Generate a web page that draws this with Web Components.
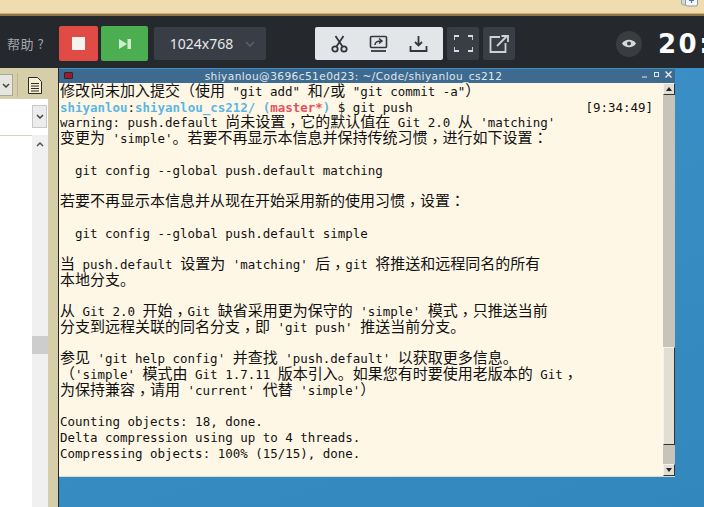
<!DOCTYPE html>
<html lang="zh-CN">
<head>
<meta charset="utf-8">
<style>
    html, body { margin: 0; height: 100%; overflow: hidden; background: #25292e; }
</style>
</head>
<body>
<app-shell>
    <top-strip></top-strip>
    <tool-bar></tool-bar>
    <div style="display: flex; height: 439px;">
        <side-panel></side-panel>
        <desk-area>
            <term-window title="shiyanlou@3696c51e0d23: ~/Code/shiyanlou_cs212"></term-window>
        </desk-area>
    </div>
</app-shell>
<script>
class AppShell extends HTMLElement {
    constructor() {
        super();
        this.attachShadow({ mode: 'open' });
        this.shadowRoot.innerHTML = `
            <style>
                :host { display: block; width: 704px; height: 507px; overflow: hidden; }
            </style>
            <slot></slot>
        `;
    }
}

class TopStrip extends HTMLElement {
    constructor() {
        super();
        this.attachShadow({ mode: 'open' });
        this.shadowRoot.innerHTML = `
            <style>
                :host { display: flex; justify-content: flex-end; align-items: flex-end; box-sizing: border-box; height: 16px; padding-right: 5px; padding-bottom: 7px; background: #efdcb0; border-bottom: 2px solid #8f7444; box-shadow: inset 0 -1px 0 #c9ae78; overflow: hidden; }
                svg { display: block; }
            </style>
            <svg width="18" height="9" viewBox="0 0 18 9">
                <rect x="0.5" y="-3" width="12" height="10" rx="2" fill="#cfd6de" stroke="#9aa4ae"/>
                <rect x="4.5" y="-3" width="12" height="11" rx="2" fill="#f4f6f8" stroke="#8d98a6"/>
                <path d="M10.5 0v5M8 2.5h5" stroke="#4a78b4" stroke-width="1.2" fill="none"/>
            </svg>
        `;
    }
}

class ToolBar extends HTMLElement {
    constructor() {
        super();
        this.attachShadow({ mode: 'open' });
        this.shadowRoot.innerHTML = `
            <style>
                :host { display: flex; align-items: center; box-sizing: border-box; height: 52px; padding: 3px 0 0 7px; background: #25292e; overflow: hidden; font-family: "Noto Sans", "Noto Sans CJK SC", sans-serif; }
                .help { flex: none; width: 52px; color: #a3a7ab; font-size: 13px; letter-spacing: 0.5px; font-family: "Noto Sans CJK SC", sans-serif; white-space: pre; }
                .btn { display: flex; flex: none; align-items: center; justify-content: center; box-sizing: border-box; height: 35px; border-radius: 2px; }
                .stop { width: 39px; background: #e04c45; }
                .next { width: 47px; margin-left: 3px; background: #4bae50; }
                .res { width: 112px; margin-left: 6px; padding-left: 5px; height: 33px; background: #393e46; color: #e6e8ea; font-size: 14px; gap: 12px; }
                .tools { width: 128px; height: 33px; margin-left: 49px; background: #e3e6e9; gap: 21px; }
                .sq { width: 32px; height: 33px; margin-left: 4px; background: #393e46; }
                .eye { display: flex; flex: none; align-items: center; justify-content: center; width: 26px; height: 26px; margin-left: 101px; border-radius: 50%; background: #3a3d40; }
                .clock { flex: none; margin-left: 16px; color: #fff; font: bold 26px "DejaVu Sans", sans-serif; letter-spacing: 2.5px; white-space: nowrap; }
                svg { display: block; }
            </style>
            <span class="help">帮助 ?</span>
            <div class="btn stop"><svg width="13" height="13"><rect width="13" height="13" fill="#f7f1f0"/></svg></div>
            <div class="btn next"><svg width="12" height="10" viewBox="0 0 12 10"><path d="M0 0l8 5-8 5z M8.5 0H12V10H8.5z" fill="#cfeccf"/></svg></div>
            <div class="btn res"><span>1024x768</span><svg width="10" height="6" viewBox="0 0 10 6"><path d="M1 1l4 4 4-4" stroke="#5b616a" stroke-width="1.5" fill="none"/></svg></div>
            <div class="btn tools">
                <svg width="17" height="18" viewBox="0 0 17 18" fill="none" stroke="#33373c" stroke-width="1.8">
                    <circle cx="4" cy="14" r="2.7"/><circle cx="13" cy="14" r="2.7"/>
                    <path d="M5.5 11.6L12.5 1M11.5 11.6L4.5 1"/>
                </svg>
                <svg width="19" height="18" viewBox="0 0 19 18" fill="none" stroke="#33373c" stroke-width="1.6">
                    <rect x="1.5" y="1.5" width="16" height="11" rx="1"/>
                    <path d="M2 16h15" stroke-width="1.8"/>
                    <path d="M6 10c0-3 2-4 6-4M10 3.5L13 6l-3 2.5" stroke-width="1.5"/>
                </svg>
                <svg width="19" height="18" viewBox="0 0 19 18" fill="none" stroke="#33373c" stroke-width="1.8">
                    <path d="M9.5 1v9M6 7l3.5 3.5L13 7"/>
                    <path d="M1.5 11v5h16v-5"/>
                </svg>
            </div>
            <div class="btn sq">
                <svg width="19" height="17" viewBox="0 0 19 17" fill="none" stroke="#d8dadc" stroke-width="1.8">
                    <path d="M0 5V1h5M14 1h5v4M19 12v4h-5M5 16H0v-4"/>
                </svg>
            </div>
            <div class="btn sq">
                <svg width="20" height="18" viewBox="0 0 20 18" fill="none" stroke="#cfd2d5" stroke-width="1.8">
                    <path d="M11 2H1.5v15h15V8"/>
                    <path d="M8 11L18 1M12.5 1H19v6"/>
                </svg>
            </div>
            <div class="eye">
                <svg width="14" height="9" viewBox="0 0 14 9"><path d="M0 4.5C3 -.5 11 -.5 14 4.5 11 9.5 3 9.5 0 4.5z" fill="#d6d8da"/><circle cx="7" cy="4.5" r="2" fill="#3a3d40"/></svg>
            </div>
            <span class="clock">20:</span>
        `;
    }
}

class SidePanel extends HTMLElement {
    constructor() {
        super();
        this.attachShadow({ mode: 'open' });
        this.shadowRoot.innerHTML = `
            <style>
                :host { display: flex; flex-direction: column; flex: none; box-sizing: border-box; width: 59px; background: #d5cea8; border-right: 1px solid #23262a; }
                .head { display: flex; align-items: center; box-sizing: border-box; height: 31px; padding-top: 3px; }
                .pick { display: flex; align-items: center; justify-content: center; box-sizing: border-box; width: 13px; height: 22px; background: #e6e5de; border: 1px solid #a8a89c; border-left: 0; }
                .sep { width: 1px; height: 24px; margin-left: 4px; background: #bdb690; }
                .doc { margin-left: 10px; }
                .body { display: flex; flex: 1; width: 48px; background: #fff; }
                .list { flex: 1; margin-top: 36px; height: 0; border-top: 1px solid #d6d2bc; }
                .bar { width: 16px; margin-top: 36px; background: #f0f0f0; }
                .arrow { display: flex; align-items: center; justify-content: center; height: 18px; }
                .thumb { height: 18px; margin-top: 183px; background: #cdcdcd; }
                .drop { position: absolute; left: 32px; top: 105px; display: flex; align-items: center; justify-content: center; width: 15px; height: 23px; box-sizing: border-box; background: #ececec; border: 1px solid #c8c8c8; }
                svg { display: block; }
            </style>
            <div class="head">
                <div class="pick"><svg width="8" height="5" viewBox="0 0 8 5"><path d="M1 1l3 3 3-3" stroke="#444" stroke-width="1.5" fill="none"/></svg></div>
                <span class="sep"></span>
                <svg class="doc" width="14" height="17" viewBox="0 0 14 17" fill="#f6f0d8" stroke="#2e2c22"><path d="M.5.5h9l4 4v12H.5z"/><path d="M3 6.5h8M3 9h8M3 11.5h8M3 14h8" fill="none"/></svg>
            </div>
            <div class="body">
                <div class="list"></div>
                <div class="bar">
                    <div class="arrow"><svg width="8" height="5" viewBox="0 0 8 5"><path d="M1 4l3-3 3 3" stroke="#555" stroke-width="1.5" fill="none"/></svg></div>
                    <div class="thumb"></div>
                </div>
            </div>
            <div class="drop"><svg width="8" height="5" viewBox="0 0 8 5"><path d="M1 1l3 3 3-3" stroke="#444" stroke-width="1.5" fill="none"/></svg></div>
        `;
    }
}

class DeskArea extends HTMLElement {
    constructor() {
        super();
        this.attachShadow({ mode: 'open' });
        this.shadowRoot.innerHTML = `
            <style>
                :host { display: block; flex: 1; padding-top: 1px; background: linear-gradient(160deg, #3d93c9, #3288bd); }
            </style>
            <slot></slot>
        `;
    }
}

class TermWindow extends HTMLElement {
    constructor() {
        super();
        this.attachShadow({ mode: 'open' });
        this.lines = [
            '修改尚未加入提交（使用 "git add" 和/或 "git commit -a"）',
            null,
            "warning: push.default 尚未设置，它的默认值在 Git 2.0 从 'matching'",
            "变更为 'simple'。若要不再显示本信息并保持传统习惯，进行如下设置：",
            '',
            '  git config --global push.default matching',
            '',
            '若要不再显示本信息并从现在开始采用新的使用习惯，设置：',
            '',
            '  git config --global push.default simple',
            '',
            "当 push.default 设置为 'matching' 后，git 将推送和远程同名的所有",
            '本地分支。',
            '',
            "从 Git 2.0 开始，Git 缺省采用更为保守的 'simple' 模式，只推送当前",
            "分支到远程关联的同名分支，即 'git push' 推送当前分支。",
            '',
            "参见 'git help config' 并查找 'push.default' 以获取更多信息。",
            "（'simple' 模式由 Git 1.7.11 版本引入。如果您有时要使用老版本的 Git，",
            "为保持兼容，请用 'current' 代替 'simple'）",
            '',
            'Counting objects: 18, done.',
            'Delta compression using up to 4 threads.',
            'Compressing objects: 100% (15/15), done.'
        ];
    }

    connectedCallback() {
        this.render();
    }

    // CJK is double width in a terminal, so the runs get a bigger font size
    wide(text) {
        return text
            .replace(/[\u3000-\u30ff\u4e00-\u9fff\uff00-\uffef]+/g, m => `<span class="w">${m}</span>`)
            .replace(/，/g, m => `<span class="p c" lang="zh-TW">${m}</span>`) // sits low in the cell
            .replace(/[：（）]/g, m => `<span class="p" lang="zh-TW">${m}</span>`);
    }

    render() {
        const title = this.getAttribute('title') || '';
        const body = this.lines.map(line => {
            if (line === null) {
                return `<div class="ln"><span class="cy">shiyanlou</span>:<span class="cy">shiyanlou_cs212/</span> <span class="cy">(</span><span class="rd">master*</span><span class="cy">)</span> $ git push${' '.repeat(23)}[9:34:49]</div>`;
            }
            return `<div class="ln">${this.wide(line) || ' '}</div>`;
        }).join('');

        this.shadowRoot.innerHTML = `
            <style>
                :host { display: block; box-sizing: border-box; width: 616px; height: 408px; background: #fef7e6; border-bottom: 1px solid #d8dcd8; }
                .bar { position: relative; display: flex; align-items: center; justify-content: center; box-sizing: border-box; height: 14px; padding-right: 27px; background: #3f6a90; color: #dfe7ee; font: 10.6px "DejaVu Sans", sans-serif; letter-spacing: 0.41px; white-space: nowrap; }
                .menu { position: absolute; left: 5px; top: 3px; width: 9px; height: 7px; border-radius: 1px; background: #a81822; border: 1px solid #1d2c3c; box-sizing: border-box; }
                .ctl { position: absolute; right: 3px; top: 2px; display: flex; gap: 5px; align-items: center; }
                .main { display: flex; height: 393px; }
                .txt { flex: 1; padding: 1px 0 0 1px; overflow: hidden; color: #111; font: 12.47px "DejaVu Sans Mono", monospace; }
                .ln { height: 15.74px; line-height: 15.74px; white-space: pre; }
                .w { font-family: "Noto Sans CJK SC", sans-serif; font-size: 15px; line-height: 0; }
                .p { font-family: "Noto Sans CJK TC", sans-serif; }
                .c { display: inline-block; transform: translateY(4px); }
                .cy { color: #5cb6e4; font-weight: bold; }
                .rd { color: #e8505a; font-weight: bold; }
                .sb { display: flex; flex-direction: column; flex: none; width: 12px; background: #c8c4ba; }
                .end { flex: none; height: 12px; background: #e2ded4; border: 1px solid #f4f2ec; border-right-color: #333; border-bottom-color: #333; box-sizing: border-box; display: flex; align-items: center; justify-content: center; }
                .thumb { flex: none; height: 98px; margin-top: 252px; background: #e2ded4; border: 1px solid #f4f2ec; border-right-color: #333; border-bottom-color: #333; box-sizing: border-box; }
                .end.down { margin-top: auto; }
                svg { display: block; }
            </style>
            <div class="bar">
                <span class="menu"></span>
                <span>${title}</span>
                <span class="ctl">
                    <svg width="7" height="7" viewBox="0 0 7 7"><path d="M1 6h5" stroke="#dfe7ee"/></svg>
                    <svg width="7" height="7" viewBox="0 0 7 7"><rect x="1.5" y="1.5" width="4" height="4" fill="none" stroke="#dfe7ee"/></svg>
                    <svg width="7" height="7" viewBox="0 0 7 7"><path d="M.5.5l6 6M6.5.5l-6 6" stroke="#eef2f6" stroke-width="1.3"/></svg>
                </span>
            </div>
            <div class="main">
                <div class="txt">${body}</div>
                <div class="sb">
                    <div class="end"><svg width="6" height="4" viewBox="0 0 6 4"><path d="M3 0l3 4H0z" fill="#222"/></svg></div>
                    <div class="thumb"></div>
                    <div class="end down"><svg width="6" height="4" viewBox="0 0 6 4"><path d="M3 4l3-4H0z" fill="#222"/></svg></div>
                </div>
            </div>
        `;
    }
}

customElements.define('app-shell', AppShell);
customElements.define('top-strip', TopStrip);
customElements.define('tool-bar', ToolBar);
customElements.define('side-panel', SidePanel);
customElements.define('desk-area', DeskArea);
customElements.define('term-window', TermWindow);
</script>
</body>
</html>
